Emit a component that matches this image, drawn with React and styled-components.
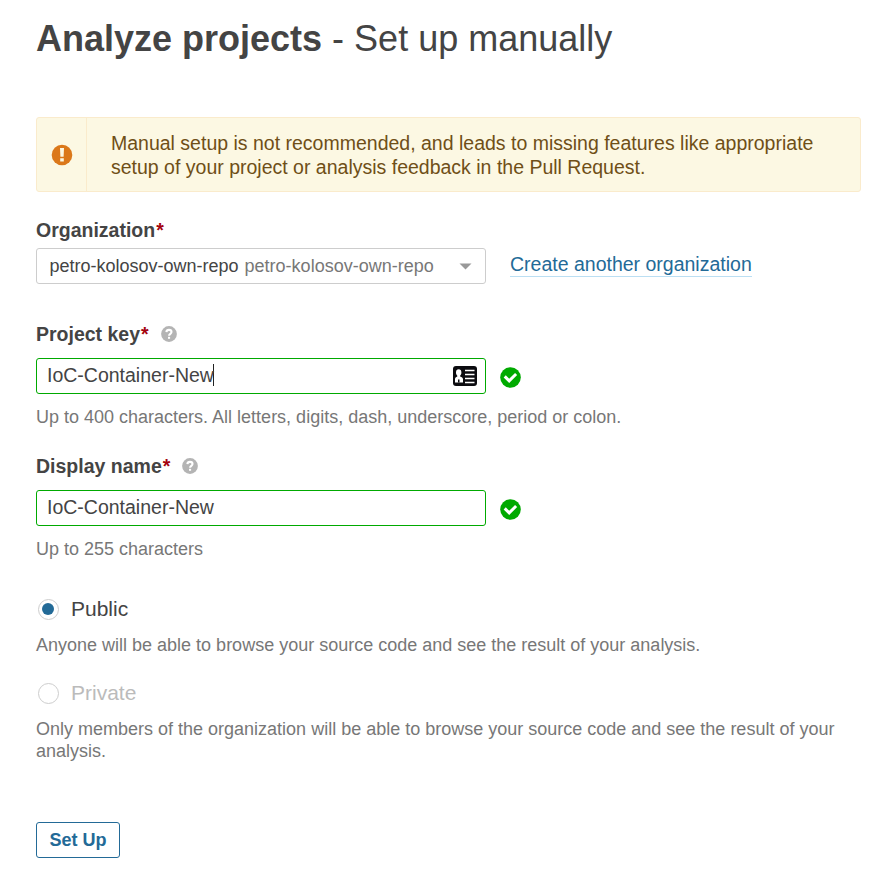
import React from "react";
import styled, { createGlobalStyle } from "styled-components";

const GlobalStyle = createGlobalStyle`
  * { box-sizing: border-box; }
  body {
    margin: 0;
    background: #fff;
    color: #444;
    font-family: "Liberation Sans", Arial, sans-serif;
    font-size: 19.5px;
  }
`;

const Page = styled.main`
  display: flex;
  flex-direction: column;
  width: 894px;
  height: 896px;
  padding: 21px 33px 0 36px;
`;

const Title = styled.h1`
  margin: 0 0 60px;
  font-size: 36px;
  line-height: 36px;
  font-weight: 400;
  white-space: nowrap;
`;

const Alert = styled.div`
  display: flex;
  height: 75px;
  border: 1px solid #faebcc;
  border-radius: 3px;
  background: #fcf8e3;
  color: #6f4f17;
`;

const AlertIcon = styled.div`
  display: flex;
  align-items: center;
  justify-content: center;
  width: 50px;
  border-right: 1px solid #faebcc;
`;

const AlertText = styled.div`
  padding: 13px 0 0 24px;
  line-height: 24px;
  white-space: nowrap;
`;

const Field = styled.section`
  display: flex;
  flex-direction: column;
  margin-top: ${(p) => p.$gap}px;
`;

const Label = styled.label`
  display: flex;
  align-items: center;
  height: 24px;
  margin-bottom: ${(p) => p.$space}px;
  font-weight: 700;
  line-height: 24px;
  svg { margin-left: 12px; }
`;

const Required = styled.em`
  margin-left: 1px;
  color: #a4030f;
  font-style: normal;
`;

const Row = styled.div`
  display: flex;
  align-items: center;
  height: 36px;
`;

const Control = styled.div`
  display: flex;
  align-items: center;
  justify-content: space-between;
  width: 450px;
  height: 36px;
  border: 1px solid ${(p) => (p.$valid ? "#00aa00" : "#cdcdcd")};
  border-radius: 3px;
  padding: ${(p) => (p.$valid ? "0 7px 0 10px" : "0 13px 0 12.5px")};
`;

const Value = styled.span`
  display: flex;
  align-items: center;
  height: 22px;
  margin-top: -2px;
  line-height: 22px;
  border-right: 1px solid ${(p) => (p.$caret ? "#222" : "transparent")};
`;

const ValueText = styled.span`
  margin-right: -1px;
`;

const Selected = styled.span`
  font-size: 18px;
  line-height: 24px;
`;

const Muted = styled.span`
  margin-left: 1px;
  color: #777;
`;

const Link = styled.a`
  height: 25px;
  margin: -4px 0 0 24px;
  border-bottom: 1px solid #bbdff3;
  color: #236a97;
  line-height: 24px;
`;

const Status = styled.span`
  display: flex;
  margin: 2px 0 0 13.5px;
`;

const Note = styled.p`
  margin: ${(p) => p.$gap}px 0 0;
  color: #777;
  font-size: 18px;
  line-height: 22px;
`;

const Option = styled.div`
  display: flex;
  align-items: center;
  height: 24px;
  margin-top: ${(p) => p.$gap}px;
  color: ${(p) => (p.$disabled ? "#bbb" : "#444")};
  font-size: 21px;
  line-height: 24px;
`;

const Radio = styled.span`
  display: flex;
  align-items: center;
  justify-content: center;
  width: 21px;
  height: 21px;
  margin: 1px 12px 0 2px;
  border: 1px solid #cdcdcd;
  border-radius: 50%;
`;

const Dot = styled.span`
  width: 12px;
  height: 12px;
  margin: 0 1px 1px 0;
  border-radius: 50%;
  background: #236a97;
`;

const Submit = styled.button`
  width: 84px;
  height: 36px;
  margin: 60px 0 0;
  padding: 0;
  border: 1px solid #236a97;
  border-radius: 3px;
  background: #fff;
  color: #236a97;
  font: 700 18px/34px "Liberation Sans", Arial, sans-serif;
`;

const WarningIcon = () => (
  <svg width="22" height="22" viewBox="0 0 22 22">
    <circle cx="11" cy="11" r="10.3" fill="#db781a" />
    <path d="M9 4h4l-.4 8.8H9.4zM9.2 14.2h3.6v3.400H9.200z" fill="#fcf8e3" />
  </svg>
);

const HelpIcon = () => (
  <svg width="16" height="16" viewBox="0 0 16 16">
    <circle cx="8" cy="8" r="7.9" fill="#b4b4b4" />
    <path d="M5.4 6.100C5.500 4.600 6.600 3.900 8 3.900c1.400 0 2.500.8 2.500 2.100 0 1.800-2.400 1.800-2.400 3.700" fill="none" stroke="#fff" strokeWidth="2.1" />
    <path d="M7 10.800h2.100v2H7z" fill="#fff" />
  </svg>
);

const CheckIcon = () => (
  <svg width="21" height="21" viewBox="0 0 21 21">
    <circle cx="10.500" cy="10.500" r="10.300" fill="#00aa00" />
    <path d="M4.700 9.400l4.500 4.500 6.900-6.900" fill="none" stroke="#fff" strokeWidth="3" />
  </svg>
);

const ContactIcon = () => (
  <svg width="26" height="22" viewBox="0 0 26 22">
    <rect x="1" y="1" width="24" height="20" rx="3" fill="#0b0b0f" />
    <path d="M3 17.500v-3.300c0-1.500.9-2.300 2.300-2.700v-.8C4.400 9.900 4 8.900 4 7.500 4 5.500 5 4.300 6.700 4.300s2.700 1.200 2.700 3.200c0 1.400-.4 2.400-1.300 3.200v.8c1.700.4 2.900 1.200 2.900 2.700v3.300z" fill="#fff" />
    <path d="M6 14.500h1.500v3H6z" fill="#0b0b0f" />
    <path d="M13 5.500h9.500M13 9.500h9.500M13 13.500h9.500M13 17.500h9.500" stroke="#fff" strokeWidth="1.500" />
  </svg>
);

const Caret = () => (
  <svg width="13" height="7" viewBox="0 0 13 7">
    <path d="M.5.5h12l-6 6z" fill="#999" />
  </svg>
);

function TextField({ gap, label, note, focused }) {
  return (
    <Field $gap={gap}>
      <Label $space={12}>{label}<Required>*</Required><HelpIcon /></Label>
      <Row>
        <Control $valid>
          <Value $caret={focused}><ValueText>IoC-Container-New</ValueText></Value>
          {focused && <ContactIcon />}
        </Control>
        <Status><CheckIcon /></Status>
      </Row>
      <Note $gap={12}>{note}</Note>
    </Field>
  );
}

export default function App() {
  return (
    <>
      <GlobalStyle />
      <Page>
        <Title><b>Analyze projects</b> - Set up manually</Title>
        <Alert>
          <AlertIcon><WarningIcon /></AlertIcon>
          <AlertText>
            Manual setup is not recommended, and leads to missing features like appropriate<br />
            setup of your project or analysis feedback in the Pull Request.
          </AlertText>
        </Alert>
        <Field $gap={26}>
          <Label $space={6}>Organization<Required>*</Required></Label>
          <Row>
            <Control>
              <Selected>petro-kolosov-own-repo <Muted>petro-kolosov-own-repo</Muted></Selected>
              <Caret />
            </Control>
            <Link>Create another organization</Link>
          </Row>
        </Field>
        <TextField gap={38} label="Project key" focused
          note="Up to 400 characters. All letters, digits, dash, underscore, period or colon." />
        <TextField gap={26} label="Display name" note="Up to 255 characters" />
        <Option $gap={37}><Radio><Dot /></Radio>Public</Option>
        <Note $gap={13}>Anyone will be able to browse your source code and see the result of your analysis.</Note>
        <Option $gap={25} $disabled><Radio />Private</Option>
        <Note $gap={13}>Only members of the organization will be able to browse your source code and see the result of your analysis.</Note>
        <Submit>Set Up</Submit>
      </Page>
    </>
  );
}
